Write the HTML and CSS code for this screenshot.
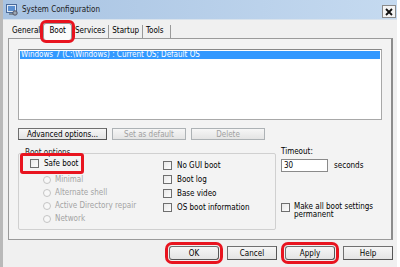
FILE: index.html
```html
<!DOCTYPE html>
<html lang="en">
<head>
    <meta charset="UTF-8">
    <title>System Configuration</title>
    <link rel="stylesheet" href="styles.css">
</head>
<body>
    <div class="window">
        <div class="titlebar">
            <svg class="app-icon" width="12" height="12" viewBox="0 0 12 12">
                <rect x="0.5" y="0.5" width="10" height="8" fill="#dfe9f5" stroke="#4a6a9a"/>
                <rect x="2" y="2" width="7" height="5" fill="#5b8fd0"/>
                <rect x="3" y="9" width="5" height="2" fill="#7a8a9a"/>
                <circle cx="9" cy="9" r="2.2" fill="#9aa6b2" stroke="#556"/>
            </svg>
            <span class="title">System Configuration</span>
            <span class="close">
                <svg width="8" height="8" viewBox="0 0 8 8"><path d="M1 1L7 7M7 1L1 7" stroke="#111" stroke-width="1.8"/></svg>
            </span>
        </div>

        <div class="tabs">
            <span class="tab">General</span>
            <span class="tab selected mark">Boot</span>
            <span class="tab">Services</span>
            <span class="tab">Startup</span>
            <span class="tab">Tools</span>
        </div>

        <div class="panel">
            <div class="listbox">
                <div class="list-item selected">Windows 7 (C:\Windows) : Current OS; Default OS</div>
            </div>

            <div class="button-row">
                <button class="btn advanced">Advanced options...</button>
                <button class="btn wide" disabled>Set as default</button>
                <button class="btn wide" disabled>Delete</button>
            </div>

            <div class="options">
                <fieldset class="group">
                    <legend>Boot options</legend>
                    <div class="group-cols">
                        <div class="col">
                            <label class="check mark-box"><span class="box"></span>Safe boot</label>
                            <label class="radio disabled first"><span class="dot"></span>Minimal</label>
                            <label class="radio disabled"><span class="dot"></span>Alternate shell</label>
                            <label class="radio disabled"><span class="dot"></span>Active Directory repair</label>
                            <label class="radio disabled"><span class="dot"></span>Network</label>
                        </div>
                        <div class="col right">
                            <label class="check"><span class="box"></span>No GUI boot</label>
                            <label class="check"><span class="box"></span>Boot log</label>
                            <label class="check"><span class="box"></span>Base video</label>
                            <label class="check"><span class="box"></span>OS boot information</label>
                        </div>
                    </div>
                </fieldset>

                <div class="timeout">
                    <div class="timeout-label">Timeout:</div>
                    <div class="timeout-row">
                        <span class="textbox">30</span>
                        <span>seconds</span>
                    </div>
                    <label class="check permanent"><span class="box"></span><span>Make all boot settings<br>permanent</span></label>
                </div>
            </div>
        </div>

        <div class="footer">
            <button class="btn foot mark">OK</button>
            <button class="btn foot">Cancel</button>
            <button class="btn foot mark">Apply</button>
            <button class="btn foot">Help</button>
        </div>
    </div>
</body>
</html>
```

FILE: styles.css
```css
body {
    margin: 0;
    background: #ffffff;
    font-family: "DejaVu Sans Condensed", "DejaVu Sans", sans-serif;
    font-size: 8px;
    color: #000;
}

.window {
    width: 397px;
    height: 267px;
    background: #f0f0f0;
    border-left: 3px solid #b9b9b9;
    box-sizing: border-box;
}

.titlebar {
    height: 19px;
    display: flex;
    align-items: center;
    padding-left: 3px;
    background: linear-gradient(to right, #a8c3e2, #c5daf0);
    border-bottom: 1px solid #d8e2ec;
}

.app-icon {
    margin-right: 4px;
}

.title {
    font-size: 8px;
    color: #1a1a1a;
}

.close {
    margin-left: auto;
    margin-right: 1px;
    margin-top: 4px;
    width: 12px;
    height: 11px;
    display: flex;
    align-items: center;
    justify-content: center;
    background: #f4f4f4;
    border: 1px solid #8a8a8a;
}

.tabs {
    display: flex;
    padding-left: 7px;
    margin-top: 5px;
    height: 13px;
    align-items: flex-end;
}

.tab {
    padding: 1px 2px 2px 2px;
    border-right: 1px solid #9a9a9a;
    line-height: 10px;
}

.tab:nth-child(n+3) {
    padding: 1px 3px 2px 3px;
}

.tab:last-child {
    padding-right: 6px;
}

.tab.selected {
    background: #fbfbfb;
    padding: 2px 5px 4px 5px;
    border: 1px solid #9a9a9a;
    border-bottom: none;
    margin-bottom: -2px;
    position: relative;
    z-index: 1;
}

.mark {
    outline: 3px solid #e8141f;
    border-radius: 3px;
}

.panel {
    margin: 0 4px 0 5px;
    height: 202px;
    border: 1px solid #9a9a9a;
    border-right: 2px solid #8c8c8c;
    background: #f3f3f3;
    box-sizing: border-box;
    padding: 10px 9px 0 9px;
}

.listbox {
    height: 71px;
    box-sizing: border-box;
    background: #fff;
    border: 1px solid #a8a8a8;
    border-top-color: #888;
    padding: 1px;
}

.list-item {
    line-height: 8px;
    padding-left: 1px;
}

.list-item.selected {
    background: #3399ff;
    color: #fff;
}

.button-row {
    display: flex;
    gap: 5px;
    margin-top: 8px;
}

.btn {
    font-family: inherit;
    font-size: 8px;
    background: linear-gradient(#f6f6f6, #e4e4e4);
    border: 1px solid #707070;
    border-right-color: #555;
    border-bottom-color: #555;
    padding: 0;
    height: 12px;
    color: #000;
}

.btn[disabled] {
    color: #a0a0a0;
    border-color: #adb2b5;
}

.btn.advanced {
    width: 89px;
}

.btn.wide {
    width: 74px;
}

.options {
    display: flex;
    margin-top: 9px;
}

.group {
    width: 258px;
    height: 81px;
    min-width: 0;
    box-sizing: border-box;
    margin: 0;
    padding: 0 0 0 11px;
    border: 1px solid #d0d0d0;
    border-radius: 2px;
}

.group legend {
    padding: 0 1px;
    margin-left: -6px;
    line-height: 8px;
    color: #222;
}

.group-cols {
    display: flex;
    padding-top: 1px;
}

.col {
    display: flex;
    flex-direction: column;
    width: 133px;
}

.col.right {
    width: 100px;
}

.check,
.radio {
    display: flex;
    align-items: center;
    line-height: 8px;
    height: 13px;
    white-space: nowrap;
}

.col.right .check {
    height: 14px;
    padding-top: 1px;
    box-sizing: border-box;
}

.box {
    width: 7px;
    height: 7px;
    border: 1px solid #6f6f6f;
    background: linear-gradient(135deg, #e8e8e8, #fdfdfd);
    margin-right: 5px;
    flex-shrink: 0;
}

.radio {
    padding-left: 13px;
}

.radio.first {
    margin-top: 2px;
}

.dot {
    width: 6px;
    height: 6px;
    border: 1px solid #c4c4c4;
    border-radius: 50%;
    background: #f7f7f7;
    margin-right: 4px;
}

.disabled {
    color: #a3a3a3;
}

.mark-box {
    box-sizing: border-box;
    width: 64px;
    height: 21px;
    margin: -5px 0 -3px -10px;
    padding-left: 7px;
    border: 3px solid #e8141f;
    border-radius: 3px;
    position: relative;
    z-index: 1;
}

.timeout {
    margin-left: 5px;
    display: flex;
    flex-direction: column;
}

.timeout-label {
    line-height: 8px;
    margin-top: -1px;
}

.timeout-row {
    display: flex;
    align-items: center;
    gap: 6px;
    margin-top: 3px;
}

.textbox {
    width: 43px;
    height: 11px;
    border: 1px solid #8a8a8a;
    background: #fff;
    padding-left: 2px;
    line-height: 11px;
}

.permanent {
    margin-top: 31px;
    height: auto;
    align-items: flex-start;
}

.permanent .box {
    margin-right: 4px;
}

.footer {
    display: flex;
    justify-content: flex-end;
    gap: 8px;
    padding-right: 4px;
    margin-top: 6px;
}

.btn.foot {
    width: 50px;
    height: 14px;
}

.footer .mark {
    outline-offset: 1px;
}
```
